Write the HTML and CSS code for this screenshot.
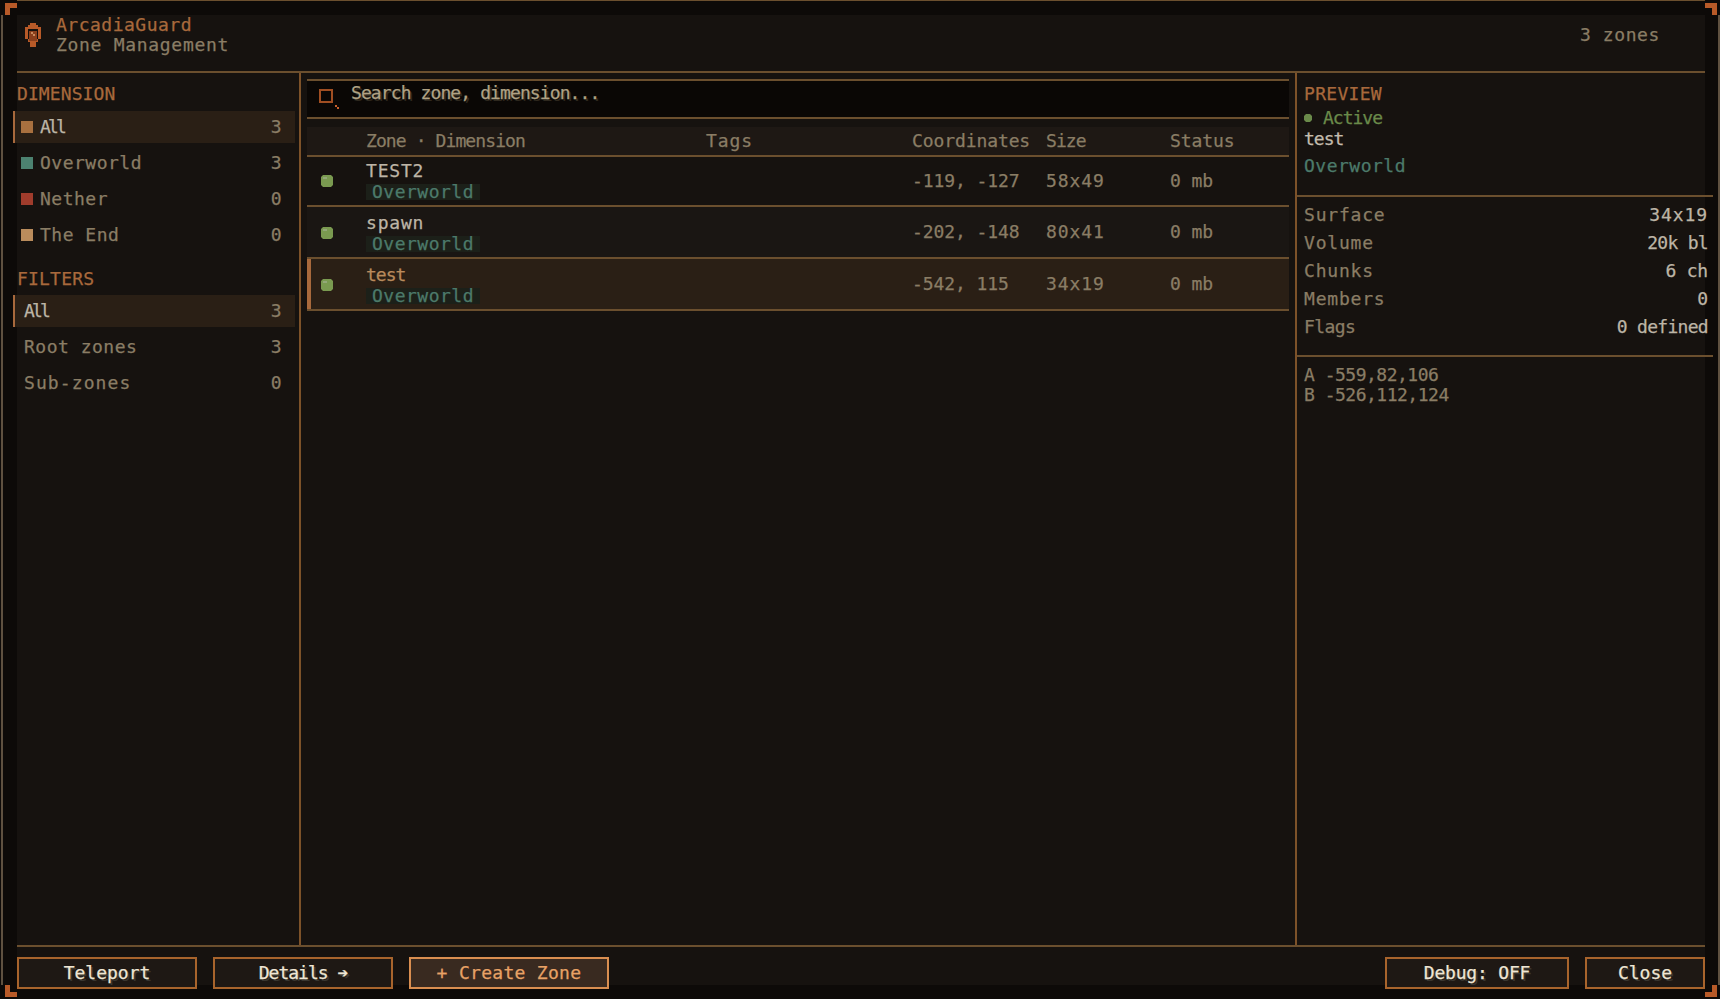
FILE: index.html
```html
<!DOCTYPE html>
<html lang="en">
<head>
    <meta charset="UTF-8">
    <title>ArcadiaGuard - Zone Management</title>
    <link rel="stylesheet" href="styles.css">
</head>
<body>
    <div class="window">
        <span class="corner corner-tl"></span>
        <span class="corner corner-tr"></span>
        <span class="corner corner-bl"></span>
        <span class="corner corner-br"></span>

        <div class="panel">
            <header class="topbar">
                <svg class="logo" width="16" height="24" viewBox="0 0 16 24" shape-rendering="crispEdges">
                    <path fill="#b85a28" d="M5 0h6v2h2v2h3v12h-3v3h-2v5H5v-5H3v-3H0V4h3V2h2z"/>
                    <path fill="#15110e" d="M3 6h10v10H3z"/>
                    <path fill="#8a3f1c" d="M4 8h8v10H4z"/>
                    <path fill="#c98a5c" d="M6 9h2v2H6zM8 11h2v2H8z"/>
                </svg>
                <div class="title">
                    <div class="title-main">ArcadiaGuard</div>
                    <div class="title-sub">Zone Management</div>
                </div>
                <div class="zone-count">3 zones</div>
            </header>

            <div class="content">
                <aside class="sidebar">
                    <h3 class="heading">DIMENSION</h3>
                    <div class="side-item active"><i class="swatch sw-all"></i><span class="side-label narrow">All</span><span class="side-num">3</span></div>
                    <div class="side-item"><i class="swatch sw-over"></i><span class="side-label">Overworld</span><span class="side-num">3</span></div>
                    <div class="side-item"><i class="swatch sw-nether"></i><span class="side-label">Nether</span><span class="side-num">0</span></div>
                    <div class="side-item"><i class="swatch sw-end"></i><span class="side-label">The End</span><span class="side-num">0</span></div>

                    <h3 class="heading heading-filters">FILTERS</h3>
                    <div class="side-item plain active"><span class="side-label narrow">All</span><span class="side-num">3</span></div>
                    <div class="side-item plain"><span class="side-label">Root zones</span><span class="side-num">3</span></div>
                    <div class="side-item plain"><span class="side-label wide">Sub-zones</span><span class="side-num">0</span></div>
                </aside>

                <main class="zones">
                    <div class="search">
                        <svg class="search-icon" width="20" height="20" viewBox="0 0 20 20" shape-rendering="crispEdges">
                            <path fill="#a04e22" d="M0 0h14v14H0zM2 2v10h10V2z" fill-rule="evenodd"/>
                            <path fill="#c8602c" d="M16 16h2v2h-2zM18 18h2v2h-2z"/>
                        </svg>
                        <span class="search-text">Search zone, dimension...</span>
                    </div>

                    <div class="row thead">
                        <span></span>
                        <span class="th-zone">Zone · Dimension</span>
                        <span class="th-tags">Tags</span>
                        <span>Coordinates</span>
                        <span class="th-size">Size</span>
                        <span>Status</span>
                    </div>

                    <div class="row zone-row first">
                        <i class="dot"></i>
                        <div class="zone-cell"><div class="zone-name">TEST2</div><span class="tag">Overworld</span></div>
                        <span></span>
                        <span class="coords">-119, -127</span>
                        <span class="dims">58x49</span>
                        <span>0 mb</span>
                    </div>
                    <div class="row zone-row alt">
                        <i class="dot"></i>
                        <div class="zone-cell"><div class="zone-name">spawn</div><span class="tag">Overworld</span></div>
                        <span></span>
                        <span class="coords">-202, -148</span>
                        <span class="dims">80x41</span>
                        <span>0 mb</span>
                    </div>
                    <div class="row zone-row selected">
                        <i class="dot"></i>
                        <div class="zone-cell"><div class="zone-name">test</div><span class="tag">Overworld</span></div>
                        <span></span>
                        <span class="coords">-542, 115</span>
                        <span class="dims">34x19</span>
                        <span>0 mb</span>
                    </div>
                </main>

                <aside class="preview">
                    <div class="preview-top">
                        <h3 class="heading">PREVIEW</h3>
                        <div class="state"><i class="state-dot"></i>Active</div>
                        <div class="preview-name">test</div>
                        <div class="preview-dim">Overworld</div>
                    </div>
                    <div class="stats">
                        <div class="stat"><span>Surface</span><b class="wide-val">34x19</b></div>
                        <div class="stat"><span>Volume</span><b class="tight-val">20k bl</b></div>
                        <div class="stat"><span>Chunks</span><b>6 ch</b></div>
                        <div class="stat"><span>Members</span><b>0</b></div>
                        <div class="stat"><span class="flags">Flags</span><b class="tight-val">0 defined</b></div>
                    </div>
                    <div class="bounds">
                        <div>A -559,82,106</div>
                        <div>B -526,112,124</div>
                    </div>
                </aside>
            </div>

            <footer class="actions">
                <button class="btn">Teleport</button>
                <button class="btn btn-details">Details <span class="arrow">➔</span></button>
                <button class="btn btn-create">+ Create Zone</button>
                <button class="btn btn-debug">Debug: OFF</button>
                <button class="btn btn-close">Close</button>
            </footer>
        </div>
    </div>
</body>
</html>
```

FILE: styles.css
```css
:root {
    --bg: #16120f;
    --strip: #0d0a08;
    --line: #6b4f2e;
    --divider: #7d5229;
    --accent: #a8693c;
    --muted: #8a7d65;
    --light: #bdb5a6;
    --teal: #4c7a6a;
    --selected: #2a1f15;
}

* {
    box-sizing: border-box;
}

html, body {
    margin: 0;
    height: 100%;
    background-color: var(--strip);
}

body {
    font-family: "DejaVu Sans Mono", "Liberation Mono", monospace;
    font-size: 18px;
    line-height: 18px;
    color: var(--muted);
    overflow: hidden;
    -webkit-text-stroke: .25px currentColor;
}

.window {
    position: relative;
    width: 1720px;
    height: 999px;
    padding: 15px 15px 14px 17px;
    background:
        linear-gradient(var(--line), var(--line)) 17px 0 / 1688px 1px no-repeat,
        linear-gradient(#5f5140, #5f5140) 1px 15px / 2px 970px no-repeat,
        linear-gradient(#5f5140, #5f5140) 1718px 15px / 2px 970px no-repeat,
        var(--strip);
}

.corner {
    position: absolute;
    width: 12px;
    height: 12px;
    background-color: #b85a28;
}

.corner::after {
    content: "";
    position: absolute;
    width: 7px;
    height: 7px;
    background-color: var(--strip);
}

.corner-tl { left: 5px; top: 3px; }
.corner-tr { right: 3px; top: 3px; }
.corner-bl { left: 5px; bottom: 2px; }
.corner-br { right: 3px; bottom: 2px; }
.corner-tl::after { right: 0; bottom: 0; }
.corner-tr::after { left: 0; bottom: 0; }
.corner-bl::after { right: 0; top: 0; }
.corner-br::after { left: 0; top: 0; }

.panel {
    display: flex;
    flex-direction: column;
    width: 1688px;
    height: 970px;
    background-color: var(--bg);
}

/* header */
.topbar {
    display: flex;
    align-items: flex-start;
    flex: 0 0 58px;
    padding: 8px 0 0 8px;
    border-bottom: 2px solid var(--line);
}

.logo {
    margin-right: 15px;
}

.title {
    margin-top: -8px;
}

.title-main {
    color: var(--accent);
    line-height: 20px;
    letter-spacing: .5px;
}

.title-sub {
    line-height: 20px;
    letter-spacing: .7px;
}

.zone-count {
    margin-left: auto;
    margin-right: 45px;
    margin-top: 3px;
    letter-spacing: .6px;
}

/* columns */
.content {
    flex: 1;
    display: flex;
    min-height: 0;
}

.sidebar {
    flex: 0 0 284px;
    padding-top: 12px;
    border-right: 2px solid var(--divider);
}

.heading {
    margin: 0 0 8px;
    font-size: 18px;
    font-weight: normal;
    line-height: 18px;
    color: var(--accent);
    letter-spacing: .1px;
}

.heading-filters {
    margin-top: 19px;
    margin-bottom: 7px;
    letter-spacing: .2px;
}

.side-item {
    display: flex;
    align-items: center;
    height: 32px;
    margin: 0 4px 4px -4px;
    padding: 0 13px 0 8px;
    letter-spacing: .5px;
}

.side-item.active {
    background-color: var(--selected);
    box-shadow: inset 2px 0 0 var(--accent);
}

.side-item.active .side-label {
    color: var(--light);
}

.narrow {
    letter-spacing: -2.8px;
}

.wide {
    letter-spacing: 1.1px;
}

.swatch {
    width: 12px;
    height: 12px;
    margin-right: 7px;
}

.sw-all { background-color: #a8703f; }
.sw-over { background-color: #4c8270; }
.sw-nether { background-color: #a03c2c; }
.sw-end { background-color: #ba8c5c; }

.plain {
    padding-left: 11px;
}

.side-num {
    margin-left: auto;
}

/* zones table */
.zones {
    flex: 0 0 994px;
    padding: 6px 6px 0;
}

.search {
    display: flex;
    height: 40px;
    padding: 10px 0 0 12px;
    border-top: 2px solid var(--line);
    border-bottom: 2px solid var(--line);
    background-color: #0a0705;
}

.search-icon {
    margin-right: 12px;
    margin-top: -2px;
}

.search-text {
    margin-top: -7px;
    color: #b0a284;
    letter-spacing: -.9px;
    text-shadow: 2px 2px 0 #2e281e;
}

.row {
    display: grid;
    grid-template-columns: 59px 340px 206px 134px 124px 1fr;
    align-items: center;
    border-bottom: 2px solid var(--line);
}

.thead {
    height: 30px;
    margin-top: 8px;
    background-color: #1e1814;
    letter-spacing: -.1px;
}

.th-zone {
    letter-spacing: -.9px;
}

.th-tags {
    letter-spacing: .9px;
}

.th-size {
    letter-spacing: -.9px;
}

.zone-row {
    height: 52px;
    letter-spacing: -.1px;
}

.zone-row.first {
    height: 50px;
}

.dims {
    letter-spacing: .9px;
}

.alt {
    background-color: #1a1613;
}

.selected {
    background-color: var(--selected);
    box-shadow: inset 4px 0 0 var(--accent);
}

.selected .zone-name {
    color: #b98a5c;
    letter-spacing: -1px;
}

.dot {
    width: 12px;
    height: 12px;
    margin-left: 14px;
    margin-top: 2px;
    background:
        linear-gradient(#93a878, #93a878) 2px 2px / 4px 2px no-repeat,
        #7a9a50;
    clip-path: polygon(2px 0, 10px 0, 12px 2px, 12px 10px, 10px 12px, 2px 12px, 0 10px, 0 2px);
}

.first .dot {
    margin-top: 0;
}

.zone-cell {
    align-self: start;
    padding-top: 7px;
}

.first .zone-cell {
    padding-top: 5px;
}

.zone-name {
    margin-bottom: 4px;
    color: var(--light);
    line-height: 18px;
    letter-spacing: .8px;
}

.tag {
    display: block;
    width: 114px;
    height: 16px;
    padding-left: 6px;
    line-height: 16px;
    background-color: #1c2019;
    color: var(--teal);
    letter-spacing: .5px;
}

/* right column */
.preview {
    flex: 0 0 418px;
    margin-right: -8px;
    border-left: 2px solid var(--divider);
}

.preview-top {
    height: 124px;
    padding: 12px 0 0 7px;
    border-bottom: 2px solid var(--line);
}

.preview-top .heading {
    margin-bottom: 6px;
    letter-spacing: .3px;
}

.state {
    display: flex;
    align-items: center;
    color: #6a8a4a;
    letter-spacing: -1px;
}

.state-dot {
    width: 8px;
    height: 8px;
    margin-right: 11px;
    background-color: #6a8a4a;
    clip-path: polygon(2px 0, 6px 0, 8px 2px, 8px 6px, 6px 8px, 2px 8px, 0 6px, 0 2px);
}

.preview-name {
    margin-top: 3px;
    color: #c4bcae;
    letter-spacing: -1px;
}

.preview-dim {
    margin-top: 9px;
    color: var(--teal);
    letter-spacing: .5px;
}

.stats {
    height: 160px;
    padding: 4px 5px 0 7px;
    border-bottom: 2px solid var(--line);
}

.stat {
    display: flex;
    justify-content: space-between;
    align-items: center;
    height: 28px;
    letter-spacing: .8px;
}

.flags {
    letter-spacing: -.6px;
}

.stat b {
    font-weight: normal;
    color: var(--light);
    letter-spacing: -.2px;
}

.stat .wide-val {
    letter-spacing: .9px;
}

.stat .tight-val {
    letter-spacing: -.7px;
}

.bounds {
    padding: 8px 0 0 7px;
    line-height: 20px;
    letter-spacing: -.5px;
}

/* footer */
.actions {
    display: flex;
    flex: 0 0 40px;
    min-height: 0;
    gap: 16px;
    padding-top: 10px;
    border-top: 2px solid var(--line);
}

.btn {
    flex: 0 0 180px;
    height: 32px;
    padding: 0;
    border: 2px solid #a8642c;
    background-color: #1e1814;
    color: #efe6d4;
    font: inherit;
    letter-spacing: 0;
    text-shadow: 2px 2px 0 #3a3630;
}

.btn-details {
    letter-spacing: -1px;
}

.arrow {
    font-weight: bold;
}

.btn-create {
    flex-basis: 200px;
    border-color: #d98e50;
    background-color: #392a20;
    color: #e8a266;
    letter-spacing: .3px;
    text-shadow: none;
}

.btn-debug {
    flex-basis: 184px;
    margin-left: auto;
    letter-spacing: -.2px;
}

.btn-close {
    flex-basis: 120px;
}
```
